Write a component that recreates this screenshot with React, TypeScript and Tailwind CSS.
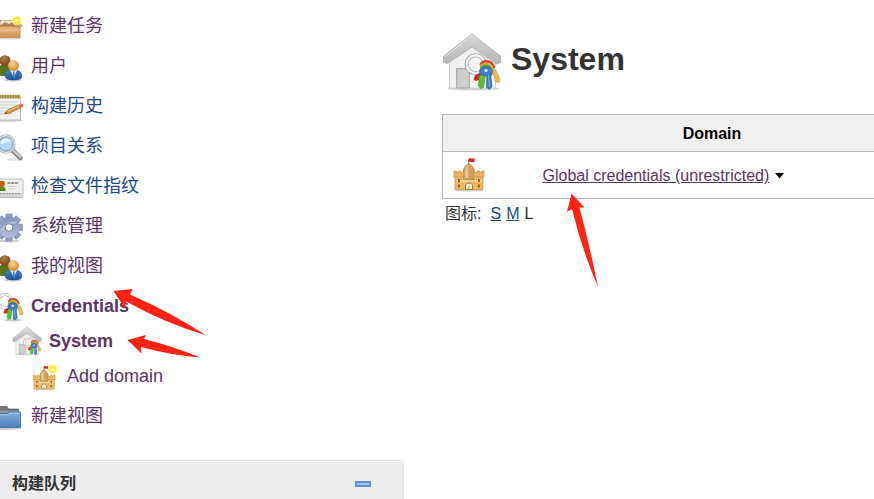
import type { ReactNode } from "react";

const VISITED = "text-[#5c3566]";
const LINK = "text-[#204a87]";

function Icon({ children }: { children: ReactNode }) {
  return (
    <svg viewBox="0 0 30 30" className="size-[30px] shrink-0 overflow-visible" aria-hidden="true">
      {children}
    </svg>
  );
}

function Sun({ x, y }: { x: number; y: number }) {
  return (
    <g>
      <circle cx={x} cy={y} r="5" fill="#fdf58a" opacity=".7" />
      <circle cx={x} cy={y} r="3.8" fill="#f8ee3c" />
      <circle cx={x} cy={y} r="1.6" fill="#fffbb0" />
    </g>
  );
}

function BoxIcon() {
  return (
    <Icon>
      <defs>
        <linearGradient id="carton" x1="0" y1="0" x2="0" y2="1">
          <stop offset="0" stopColor="#e6b67c" />
          <stop offset="1" stopColor="#cf9350" />
        </linearGradient>
      </defs>
      <ellipse cx="15" cy="27" rx="13" ry="1.600" fill="#000" opacity=".15" />
      <path d="M4 9h20l2 7H2z" fill="#b98148" />
      <path d="M7 9.500h15l1 4H6z" fill="#f1e6d3" />
      <path d="M8 13l3-2 4 2 3-2 4 3H8z" fill="#a98963" />
      <path d="M2.500 15.500h23.500v11H2.500z" fill="url(#carton)" stroke="#c0894a" strokeWidth=".8" />
      <path d="M2.500 15.500L0 15l3.500-4.500h2zM24 10.500l4.500 4.500-2 1.500-4-3z" fill="#e0ad70" stroke="#b87f42" strokeWidth=".6" />
      <path d="M3.500 18.500h21.500v2h-21.500z" fill="#f0cfa2" opacity=".6" />
      <Sun x={22.700} y={9.500} />
    </Icon>
  );
}

function PeopleIcon() {
  return (
    <Icon>
      <defs>
        <radialGradient id="headBack" cx=".4" cy=".3" r=".7">
          <stop offset="0" stopColor="#b98145" />
          <stop offset="1" stopColor="#6f4210" />
        </radialGradient>
        <radialGradient id="headFront" cx=".4" cy=".3" r=".7">
          <stop offset="0" stopColor="#fbd29a" />
          <stop offset="1" stopColor="#d98730" />
        </radialGradient>
        <linearGradient id="suit" x1="0" y1="0" x2="0" y2="1">
          <stop offset="0" stopColor="#4d86c8" />
          <stop offset="1" stopColor="#1f4f93" />
        </linearGradient>
      </defs>
      <ellipse cx="19" cy="29" rx="9" ry="1.500" fill="#000" opacity=".2" />
      <path d="M1 20c0-4 4-6 9-6s9 2 9 6-3 5-9 5-9-1-9-5z" fill="#55741c" />
      <circle cx="11" cy="9.700" r="5.500" fill="url(#headBack)" />
      <path d="M11 25c0-4.500 3-6.500 8.500-6.500s8.500 2 8.500 6.500c0 3-3 4.200-8.500 4.200S11 28 11 25z" fill="url(#suit)" />
      <path d="M16 19h7l-3 7.500z" fill="#dce9f7" />
      <path d="M19 20.500h1.400l.6 5-1 2-1-2z" fill="#4b86c8" />
      <circle cx="19.500" cy="14.500" r="5.400" fill="url(#headFront)" />
    </Icon>
  );
}

function NotepadIcon() {
  return (
    <Icon>
      <ellipse cx="14" cy="29.500" rx="14" ry="1.300" fill="#000" opacity=".2" />
      <path d="M2.500 6.500h24v22.500h-24z" fill="#f2f2f0" stroke="#bdbdb8" />
      <path d="M2 4h24.500v3.500H2z" fill="#c4b661" />
      <path d="M3 5.500h23" stroke="#8a7e33" strokeWidth="3.600" strokeDasharray="1.200 1.400" />
      <path d="M5 11h18M5 14h17M5 17h12M5 20h7M5 23h14" stroke="#c9c9c9" strokeWidth=".9" />
      <path d="M10.500 22.700l3-3.600 11-5.200 2 3-11 5.300z" fill="#dd9441" stroke="#9a5b18" strokeWidth=".6" />
      <path d="M14 20.200l11-5.200" stroke="#f6c889" />
      <path d="M24.500 13.900l2.500-1.200 2.500.8-.4 2-2.600 1.400z" fill="#dc6c64" />
      <path d="M10.500 22.700l1.300-1.600 1 1.200z" fill="#3b3022" />
    </Icon>
  );
}

function MagnifierIcon() {
  return (
    <Icon>
      <ellipse cx="21" cy="28.500" rx="8" ry="1.300" fill="#000" opacity=".12" />
      <path d="M18 19l8.500 8" stroke="#8b8b8b" strokeWidth="4.600" strokeLinecap="round" />
      <path d="M18 18.500l8.500 7.500" stroke="#d7d7d7" strokeWidth="1.800" strokeLinecap="round" />
      <circle cx="12" cy="13" r="8.400" fill="#b9d6f2" stroke="#b0b3b5" strokeWidth="2.600" />
      <circle cx="12" cy="13" r="8.400" fill="none" stroke="#eeeeee" />
      <circle cx="12" cy="13" r="6.900" fill="none" stroke="#7ba7d8" strokeWidth=".9" />
      <path d="M6.500 13c0-4 3-6 7-5.500 2 .5 3 2 3 3-4 0-6 2-10 2.500z" fill="#e7f2fc" />
    </Icon>
  );
}

function CardIcon() {
  return (
    <Icon>
      <rect x=".5" y="8" width="28.500" height="18.500" rx="1" fill="#efefed" stroke="#bcbcb9" />
      <path d="M1 22h27.500v4H1z" fill="#d4d4d2" />
      <path d="M3 22.500h23" stroke="#8f8f8d" strokeDasharray="2 1" />
      <path d="M2 10h10v10H2z" fill="#d8dfcc" />
      <path d="M2 20c0-3.500 2-4.500 5-4.500s4.500 1 4.500 4.500z" fill="#5a8a1d" />
      <circle cx="7.700" cy="12.800" r="3.100" fill="#b4621a" />
      <path d="M13.500 12h11" stroke="#7d7d7b" strokeWidth="1.400" strokeDasharray="3 .6" />
      <path d="M14 15.500h9M14 18h7" stroke="#cacac8" />
    </Icon>
  );
}

function GearIcon() {
  const teeth = [0, 45, 90, 135, 180, 225, 270, 315];
  return (
    <Icon>
      <defs>
        <linearGradient id="gear" x1="0" y1="0" x2="0" y2="1">
          <stop offset="0" stopColor="#858eb9" />
          <stop offset="1" stopColor="#b9c2e0" />
        </linearGradient>
      </defs>
      <ellipse cx="15" cy="30" rx="11" ry="1.500" fill="#000" opacity=".2" />
      {teeth.map((a) => (
        <path
          key={a}
          d="M11.500 8l.5-5h6l.5 5z"
          transform={`rotate(${a} 15 16.500)`}
          fill="#929cc6"
          stroke="#7b84b0"
          strokeWidth=".6"
        />
      ))}
      <circle cx="15" cy="16.500" r="10.300" fill="url(#gear)" />
      <path d="M8 19.500c3-7 8-8 14-8" stroke="#c7cee8" strokeWidth="2" fill="none" opacity=".7" />
      <circle cx="15" cy="16.500" r="3.800" fill="#fff" stroke="#7780ad" />
    </Icon>
  );
}

/* Silver ring with red, green, blue and yellow keys, placed on the house's 60-unit grid. */
function Keys() {
  return (
    <g strokeLinejoin="round">
      <circle cx="33.700" cy="32.300" r="9" fill="none" stroke="#a8a8a8" strokeWidth="4" />
      <circle cx="33.700" cy="32.300" r="9" fill="none" stroke="#f4f4f4" strokeWidth="2.400" />
      <path d="M39 40l-6 3.500-1.500 4 2.500 1.500 5-2z" fill="#d6262c" />
      <path d="M50 37l3.500 12.500 3.500 1 .8-3-3.800-9z" fill="#e8c048" stroke="#b98c1f" strokeWidth=".6" />
      <path d="M41 38l-4 7-.5 9 2 2.500 3-1 2-12z" fill="#55c233" stroke="#3b9a22" strokeWidth=".6" />
      <path d="M37.500 32c1.500-3.500 7-5 11-3 3 1.500 4.500 4 4.500 7l-6 3-8 0z" fill="#d0432c" />
      <path d="M38 34c2-3.500 6-4.500 9.500-3 2.500 1.300 4 3.500 4 6l-6 3-6-1z" fill="#eda735" />
      <path d="M38 36c2-3.500 5.500-4.500 8.500-3 2.500 1.200 4 3 4 5.500l-6 3-6-2z" fill="#58b046" />
      <path d="M37.500 38.500c2-3.500 6-5 9.500-3.500 3.500 1.800 4.500 6 2 9.500l1 10-2.500 3-3-2 .3-11.500-6.500-1.500z" fill="#3f7cca" stroke="#28569b" strokeWidth=".6" />
      <path d="M46.500 43l.8 12" stroke="#86b2e4" />
      <circle cx="44" cy="38.500" r="1.600" fill="#dbe8f6" />
    </g>
  );
}

function KeysIcon() {
  return (
    <Icon>
      <ellipse cx="19" cy="29" rx="9" ry="1.300" fill="#000" opacity=".2" />
      <g transform="translate(-14.300 -14) scale(.75)">
        <Keys />
      </g>
    </Icon>
  );
}

function HouseIcon({ className }: { className: string }) {
  return (
    <svg viewBox="0 0 60 60" className={`shrink-0 ${className}`} aria-hidden="true">
      <defs>
        <linearGradient id="roof" x1="0" y1="0" x2="0" y2="1">
          <stop offset="0" stopColor="#d9d9d9" />
          <stop offset="1" stopColor="#b4b4b4" />
        </linearGradient>
        <linearGradient id="wall" x1="0" y1="0" x2="1" y2="1">
          <stop offset="0" stopColor="#ececec" />
          <stop offset="1" stopColor="#f8f8f8" />
        </linearGradient>
      </defs>
      <ellipse cx="31" cy="56.500" rx="26" ry="1.800" fill="#000" opacity=".18" />
      <path d="M7.500 28L30 10l23.500 18v28h-46z" fill="url(#wall)" stroke="#cfcfcf" />
      <path d="M14.500 36.500h13V56h-13z" fill="#c3c3c1" stroke="#adadad" />
      <path d="M16.500 38.500h9V55h-9z" fill="#cfcfcd" />
      <circle cx="24" cy="46" r="1.300" fill="#e8d04b" />
      <path d="M30 2L1.500 24v6.500l4 1L30 15l24.500 17 4-1.500V24z" fill="url(#roof)" stroke="#b0b0b0" strokeWidth=".8" strokeLinejoin="round" />
      <path d="M30 3.500L3 24.500" stroke="#e6e6e6" />
      <Keys />
    </svg>
  );
}

/* Sand castle with a red flag, on a 32-unit grid. */
function Castle() {
  return (
    <g>
      <ellipse cx="16" cy="31.500" rx="15" ry="1.200" fill="#000" opacity=".18" />
      <path d="M15.700 1v7" stroke="#8d6a35" strokeWidth=".9" />
      <path d="M15.500-.5c2-1 3 .7 6-.2v3.700c-3 .8-4-.8-6 0z" fill="#d3242e" />
      <path d="M10.500 11c.5-3 3-5 5.200-7 2.200 2 5 4 5.600 7v9.500H10.500z" fill="#cfa25c" stroke="#a87324" strokeWidth=".7" />
      <path d="M12 11c.5-2 2-4 3.500-5v13H12z" fill="#ead1a4" opacity=".7" />
      <path d="M1 12h2.400v1.600h2V12h2.400v1.600H10V12h.5v6H9v3h14v-3h-2v-5h1v.6h2.200V12h2.400v1.600h2V12H31v6h-1v12.500H2V18H1z" fill="#e9b869" stroke="#c8923f" strokeWidth=".7" />
      <path d="M2.500 18h7M22.500 18h7" stroke="#d09a48" />
      <path d="M3 22h26" stroke="#f6d9a3" strokeWidth="1.500" />
      <path d="M5 20h1.800v3H5zM25 20h1.800v3H25zM5 25.500h1.800v3H5zM25 25.500h1.800v3H25z" fill="#945e15" />
      <path d="M12.500 30.500V27c0-4 7-4 7 0v3.500z" fill="#fbf3df" stroke="#ae7523" />
      <path d="M15 30v-3h2v3z" fill="#e6bd79" />
    </g>
  );
}

function AddDomainIcon() {
  return (
    <Icon>
      <g transform="translate(2.500 5.500) scale(.73)">
        <Castle />
      </g>
      <Sun x={22.700} y={8.300} />
    </Icon>
  );
}

function FolderIcon() {
  return (
    <Icon>
      <defs>
        <linearGradient id="folder" x1="0" y1="0" x2="0" y2="1">
          <stop offset="0" stopColor="#86afdb" />
          <stop offset="1" stopColor="#4c80ba" />
        </linearGradient>
      </defs>
      <ellipse cx="14" cy="27.500" rx="14" ry="1.500" fill="#000" opacity=".2" />
      <path d="M1 5.500h12L14.500 8h10v6H1z" fill="#6d7781" stroke="#535e68" strokeWidth=".7" />
      <path d="M2 9.500h22v3H2z" fill="#8d969f" />
      <path d="M.5 12.500h13l2-1.500h11v15.500H.5z" fill="url(#folder)" stroke="#3c6ca3" strokeWidth=".8" />
      <path d="M1.500 13.700h12.500l2-1.500h10" stroke="#abc9ea" fill="none" />
    </Icon>
  );
}

type Task = { label: string; icon: ReactNode; style: string };

const tasks: Task[] = [
  { label: "新建任务", icon: <BoxIcon />, style: `h-10 ${VISITED}` },
  { label: "用户", icon: <PeopleIcon />, style: `h-10 ${VISITED}` },
  { label: "构建历史", icon: <NotepadIcon />, style: `h-10 ${LINK}` },
  { label: "项目关系", icon: <MagnifierIcon />, style: `h-10 ${LINK}` },
  { label: "检查文件指纹", icon: <CardIcon />, style: `h-10 ${LINK}` },
  { label: "系统管理", icon: <GearIcon />, style: `h-10 ${VISITED}` },
  { label: "我的视图", icon: <PeopleIcon />, style: `h-10 ${VISITED}` },
  { label: "Credentials", icon: <KeysIcon />, style: `h-10 font-bold ${VISITED}` },
  { label: "System", icon: <HouseIcon className="size-[30px]" />, style: `h-[30px] pl-[18px] font-bold ${VISITED}` },
  { label: "Add domain", icon: <AddDomainIcon />, style: `h-10 pl-9 ${VISITED}` },
  { label: "新建视图", icon: <FolderIcon />, style: `h-10 ${VISITED}` },
];

function Sidebar() {
  return (
    <aside className="w-[404px] shrink-0 overflow-hidden pt-1.5">
      <nav className="-ml-1.5">
        <ul>
          {tasks.map((t) => (
            <li key={t.label}>
              <a href="#" className={`flex items-center gap-[7px] text-[18px] leading-6 ${t.style}`}>
                {t.icon}
                {t.label}
              </a>
            </li>
          ))}
        </ul>
      </nav>
      <section className="mt-6 rounded-tr border-t border-r border-[#e8e8e8]">
        <div className="mt-px flex h-11 items-center justify-between rounded-tr bg-[#ededed] pr-8 pl-3">
          <h2 className="text-[16px] leading-6 font-bold text-[#333]">构建队列</h2>
          <button type="button" aria-label="Collapse" className="flex h-6 items-center">
            <span className="h-1.5 w-4 rounded-[1px] border-2 border-[#5f8fc9] bg-[#a9c6e8]" />
          </button>
        </div>
      </section>
    </aside>
  );
}

function Main() {
  return (
    <main className="min-w-0 flex-1 overflow-hidden pt-8 pl-[38px] text-[16px] leading-6 text-[#333]">
      <div className="flex items-center gap-[9px]">
        <HouseIcon className="size-[60px]" />
        <h1 className="pb-1.5 text-[32px] leading-9 font-bold">System</h1>
      </div>
      {/* The table runs past the right edge of the pane. */}
      <table className="mt-[22px] w-[125%] table-fixed border-collapse border border-[#bbb]">
        <colgroup>
          <col className="w-[90px]" />
          <col />
        </colgroup>
        <thead>
          <tr className="h-[37px] border-b border-[#bbb] bg-[#f0f0f0]">
            <th colSpan={2} className="pt-0.5 font-bold text-black">
              Domain
            </th>
          </tr>
        </thead>
        <tbody>
          <tr className="h-[47px]">
            <td className="pl-2.5">
              <svg viewBox="0 0 32 32" className="size-8 overflow-visible" aria-hidden="true">
                <Castle />
              </svg>
            </td>
            <td className="pt-0.5 pl-2.5">
              <div className="flex items-center gap-1.5">
                <a href="#" className={`underline ${VISITED}`}>
                  Global credentials (unrestricted)
                </a>
                <button type="button" aria-label="Open menu">
                  <svg viewBox="0 0 9 6" className="h-1.5 w-[9px]" aria-hidden="true">
                    <path d="M0 0h9L4.500 5.500z" fill="#000" />
                  </svg>
                </button>
              </div>
            </td>
          </tr>
        </tbody>
      </table>
      <div className="flex gap-[5px] pt-[3px] pl-[3px]">
        <span className="mr-1">图标:</span>
        <a href="#" className={`underline ${LINK}`}>
          S
        </a>
        <a href="#" className={`underline ${LINK}`}>
          M
        </a>
        <span>L</span>
      </div>
    </main>
  );
}

export default function App() {
  return (
    <div className="relative flex h-screen overflow-hidden bg-white font-['Liberation_Sans','Noto_Sans_CJK_SC',sans-serif]">
      <Sidebar />
      <Main />
      <svg viewBox="0 0 620 360" className="pointer-events-none absolute top-0 left-0 h-[360px] w-[620px]" fill="#ff2314" aria-hidden="true">
        <path d="M113.500 291L132.500 289L130 294.500Q170 312 206.500 335.500Q165 323 126 301.500L125 308.500z" />
        <path d="M127.500 340L146 335L144 339Q172 346 200.500 357.500Q170 355 141 347L141.500 353.500z" />
        <path d="M571.500 193.500L584.500 207.500L579.500 207.500Q590 247 598 287Q582 250 572 209L567 212z" />
      </svg>
    </div>
  );
}
